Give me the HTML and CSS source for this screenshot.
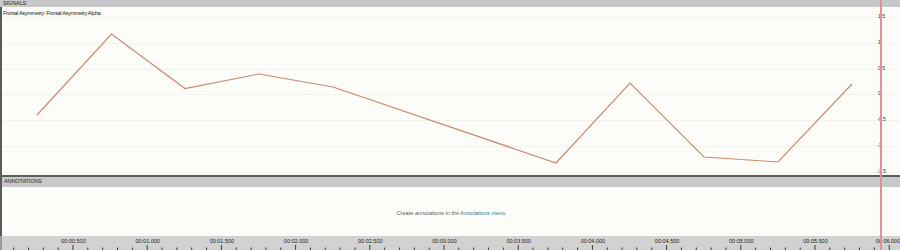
FILE: index.html
```html
<!DOCTYPE html>
<html lang="en">
<head>
    <meta charset="UTF-8">
    <meta name="viewport" content="width=device-width, initial-scale=1.0">
    <title>Signals</title>
    <link rel="stylesheet" href="styles.css">
</head>
<body>
    <div class="viewer">
        <div class="bar bar-top">SIGNALS</div>

        <div class="plot">
            <svg class="plot-svg" viewBox="2 7 898 168" preserveAspectRatio="none">
                <g class="grid">
                    <line x1="2" x2="900" y1="17.5" y2="17.5"/>
                    <line x1="2" x2="900" y1="43.5" y2="43.5"/>
                    <line x1="2" x2="900" y1="69.5" y2="69.5"/>
                    <line x1="2" x2="900" y1="94.5" y2="94.5"/>
                    <line x1="2" x2="900" y1="120.5" y2="120.5"/>
                    <line x1="2" x2="900" y1="146.5" y2="146.5"/>
                    <line x1="2" x2="900" y1="172.5" y2="172.5"/>
                </g>
                <polyline class="trace" points="37,115 111.5,34 185,88.5 259,74 333,87 556,163 630,83 704,157 778,162 852,84"/>
                <g class="yaxis">
                    <text x="878" y="17">1.5</text>
                    <text x="878" y="43">1</text>
                    <text x="878" y="69">0.5</text>
                    <text x="878" y="94">0</text>
                    <text x="877" y="120">-0.5</text>
                    <text x="877" y="146">-1</text>
                    <text x="877" y="172">-1.5</text>
                </g>
            </svg>
            <div class="plot-label">Frontal Asymmetry: Frontal Asymmetry Alpha</div>
        </div>

        <div class="bar bar-sub">ANNOTATIONS</div>

        <div class="annotations">
            <p class="hint">Create annotations in the <a href="#" class="hint-link">Annotations menu</a></p>
        </div>

        <div class="timeline">
            <svg class="timeline-svg" viewBox="2 236 898 14" preserveAspectRatio="none">
                <defs>
                    <pattern id="ticks" patternUnits="userSpaceOnUse" x="-1.7" y="236" width="74.2" height="14">
                        <line class="tick-major" x1="0.5" x2="0.5" y1="9" y2="14"/>
                        <line class="tick-minor" x1="15.3" x2="15.3" y1="11.5" y2="14"/>
                        <line class="tick-minor" x1="30.2" x2="30.2" y1="11.5" y2="14"/>
                        <line class="tick-minor" x1="45" x2="45" y1="11.5" y2="14"/>
                        <line class="tick-minor" x1="59.9" x2="59.9" y1="11.5" y2="14"/>
                    </pattern>
                </defs>
                <rect x="2" y="236" width="898" height="14" fill="url(#ticks)"/>
                <g class="xaxis">
                    <text x="73.5" y="242.5">00:00.500</text>
                    <text x="147.7" y="242.5">00:01.000</text>
                    <text x="221.9" y="242.5">00:01.500</text>
                    <text x="296.1" y="242.5">00:02.000</text>
                    <text x="370.3" y="242.5">00:02.500</text>
                    <text x="444.5" y="242.5">00:03.000</text>
                    <text x="518.7" y="242.5">00:03.500</text>
                    <text x="592.9" y="242.5">00:04.000</text>
                    <text x="667.1" y="242.5">00:04.500</text>
                    <text x="741.3" y="242.5">00:05.000</text>
                    <text x="815.5" y="242.5">00:05.500</text>
                    <text x="888" y="242.5">00:06.000</text>
                </g>
            </svg>
        </div>

        <div class="cursor"></div>
    </div>
</body>
</html>
```

FILE: styles.css
```css
html, body {
    margin: 0;
    padding: 0;
}
body {
    width: 900px;
    height: 250px;
    overflow: hidden;
    background-color: #fbfbf7;
    font-family: "Liberation Sans", Arial, sans-serif;
    color: #222;
}
.viewer {
    position: relative;
    display: flex;
    flex-direction: column;
    width: 900px;
    height: 250px;
}
.bar {
    background-color: #c7c8ca;
    font-size: 5.6px;
    color: #2a2a2a;
    padding-left: 3px;
    box-sizing: border-box;
    letter-spacing: -0.15px;
}
.bar-top {
    height: 7px;
    line-height: 7px;
}
.bar-sub {
    height: 10px;
    line-height: 9px;
    border-left: 2px solid #5a5a5a;
    padding-left: 2px;
}
.plot {
    position: relative;
    height: 168px;
    border-left: 2px solid #5a5a5a;
    border-bottom: 2px solid #5e5e5e;
    background-color: #fcfcf8;
}
.plot-svg {
    position: absolute;
    left: 0;
    top: 0;
    width: 898px;
    height: 168px;
}
.plot-label {
    position: relative;
    padding: 3px 0 0 1px;
    font-size: 5.5px;
    letter-spacing: -0.3px;
    line-height: 7px;
    color: #1a1a1a;
}
.grid line {
    stroke: #f2f2ed;
    stroke-width: 1;
}
.trace {
    fill: none;
    stroke: #c98b70;
    stroke-width: 1.2;
    stroke-linejoin: miter;
}
.yaxis text {
    font-family: "Liberation Sans", Arial, sans-serif;
    font-size: 5.2px;
    fill: #333;
    dominant-baseline: middle;
}
.annotations {
    display: flex;
    align-items: center;
    justify-content: center;
    height: 49px;
    border-left: 2px solid #5a5a5a;
    background-color: #fcfcf8;
}
.hint {
    margin: 2px 0 0 0;
    font-size: 5.6px;
    color: #5d6163;
}
.hint-link {
    color: #2d7f9a;
    text-decoration: none;
}
.timeline {
    height: 14px;
    border-left: 2px solid #9a9a9a;
    background-color: #d2d2d2;
}
.timeline-svg {
    display: block;
    width: 898px;
    height: 14px;
}
.tick-major, .tick-minor {
    stroke: #3a3a3a;
    stroke-width: 1;
}
.xaxis text {
    font-family: "Liberation Sans", Arial, sans-serif;
    font-size: 5.5px;
    fill: #222;
    text-anchor: middle;
}
.cursor {
    position: absolute;
    top: 0;
    left: 880px;
    width: 2px;
    height: 250px;
    background-color: #e48e9a;
}
```
